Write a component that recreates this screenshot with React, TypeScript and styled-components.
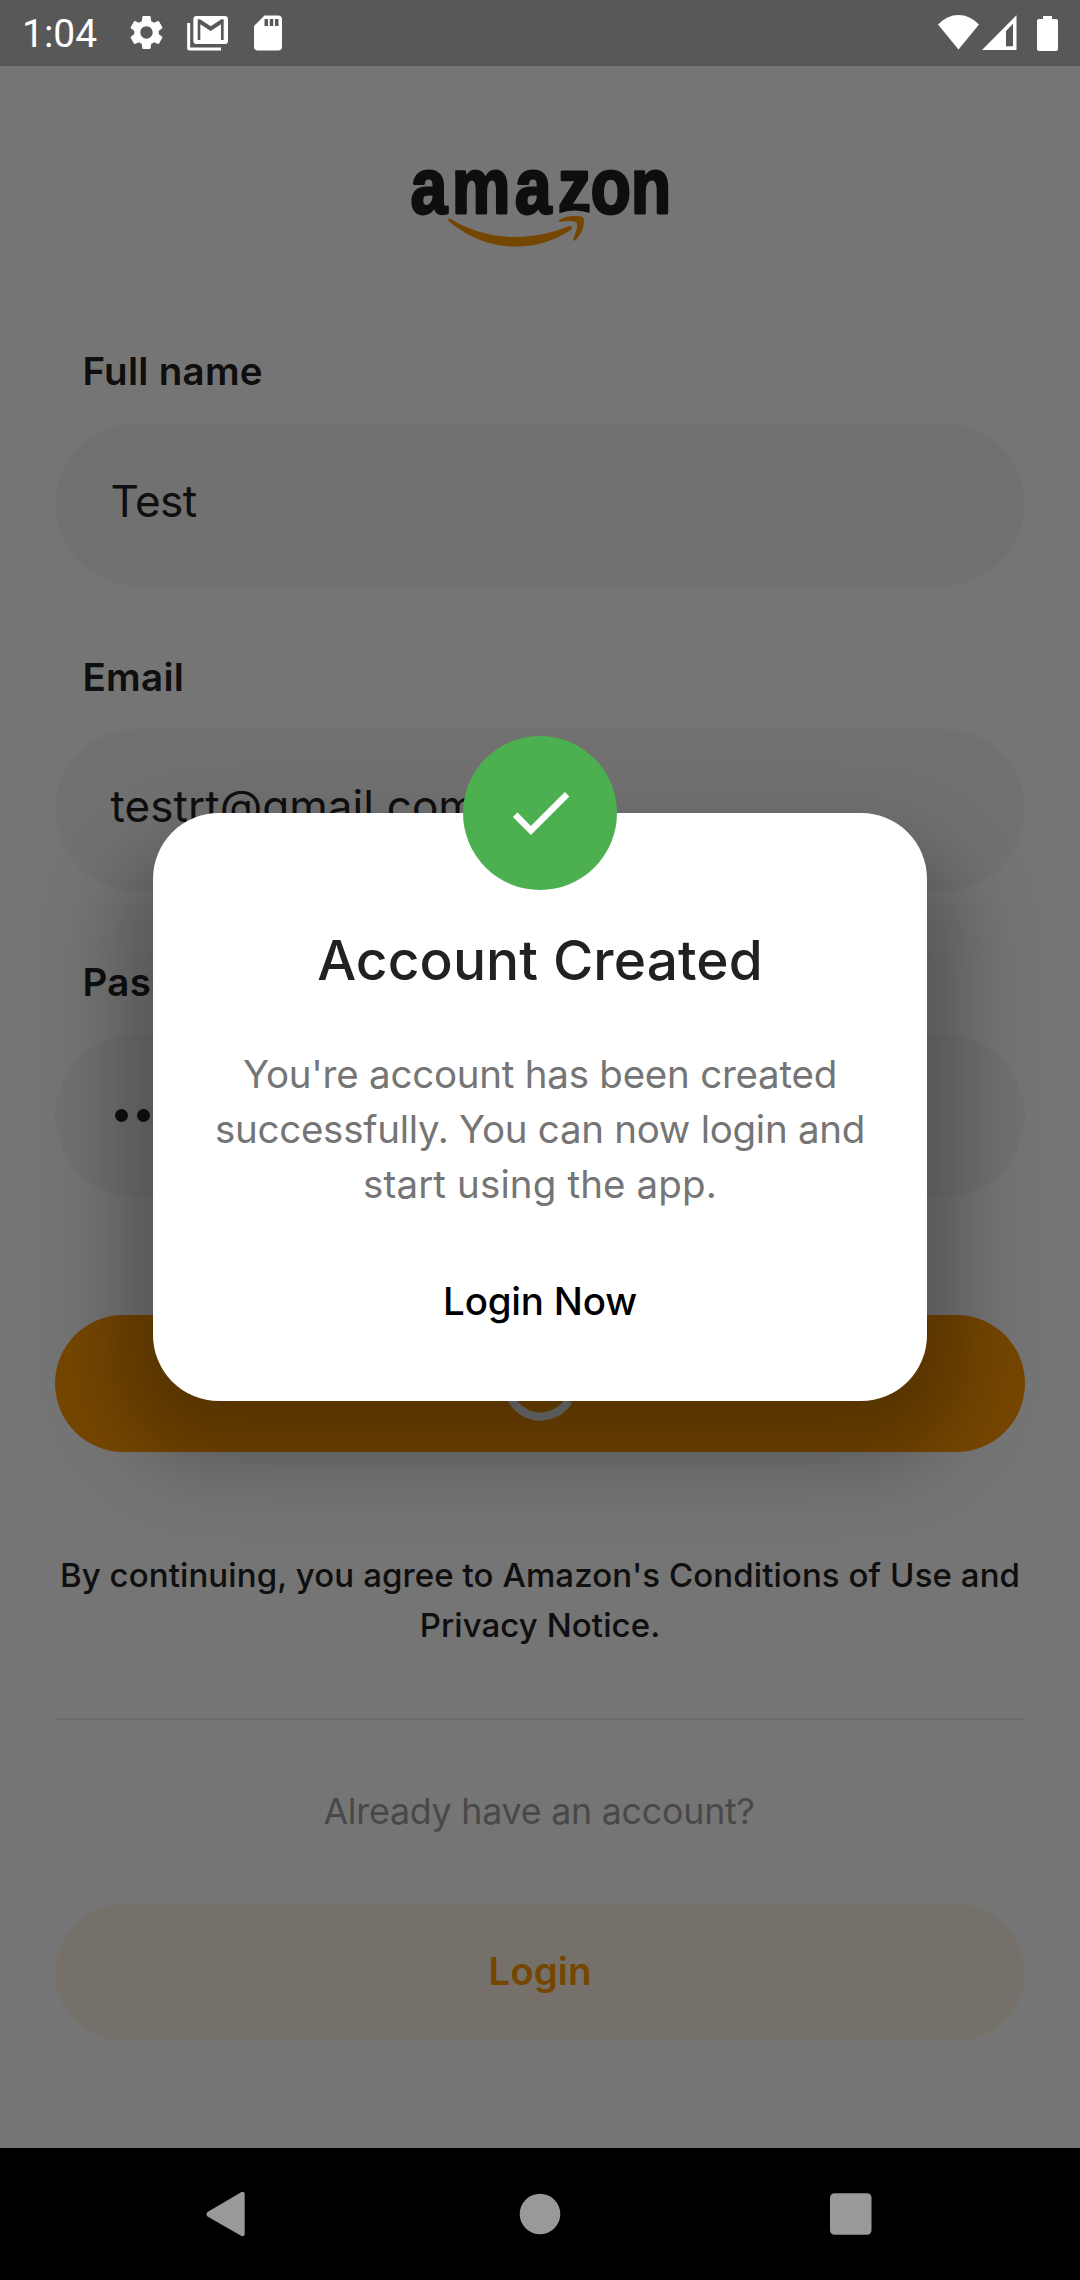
import React from 'react';
import styled, { createGlobalStyle } from 'styled-components';
import { MdSettings, MdSdCard, MdCheck } from 'react-icons/md';

const GlobalStyle = createGlobalStyle`
  *, *::before, *::after { box-sizing: border-box; }
  body {
    margin: 0;
    background: #fff;
    font-family: Inter, Roboto, sans-serif;
    color: #212121;
  }
  svg { display: block; flex: none; overflow: visible; }
  button { border: 0; padding: 0; font-family: inherit; }
`;

const Phone = styled.div`
  width: 1080px;
  height: 2280px;
  display: flex;
  flex-direction: column;
  overflow: hidden;
`;

const StatusBar = styled.header`
  height: 66px;
  flex: none;
  display: flex;
  align-items: flex-start;
  justify-content: space-between;
  background: #585858;
  color: #fff;
`;

const StatusLeft = styled.div`
  display: flex;
  align-items: flex-start;
  padding: 12px 0 0 22px;
`;

const Clock = styled.span`
  width: 104px;
  font: 400 39px/44px Roboto, sans-serif;
`;

const StatusIcon = styled.span<{ $gap: number; $drop?: number }>`
  margin-top: ${(p) => p.$drop ?? 0}px;
  margin-right: ${(p) => p.$gap}px;
`;

const StatusRight = styled.div`
  display: flex;
  padding: 14px 22px 0 0;
`;

const Screen = styled.main`
  position: relative;
  height: 2082px;
  flex: none;
  display: flex;
  flex-direction: column;
  padding: 74px 55px 0;
  background: #fff;
`;

const LogoBox = styled.div`
  display: flex;
  justify-content: center;
  margin-bottom: 78.4px;
`;

const Field = styled.label`
  display: flex;
  flex-direction: column;
  gap: 29.1px;
  margin-bottom: 67.85px;
`;

const FieldLabel = styled.span`
  padding-left: 27.5px;
  font-size: 38.5px;
  line-height: 46px;
  font-weight: 600;
  letter-spacing: 0.28px;
`;

const Input = styled.div<{ $spacing?: number; $lift?: number }>`
  display: flex;
  align-items: center;
  height: 162.5px;
  padding: 0 55px ${(p) => p.$lift ?? 8}px 55.5px;
  border-radius: 82px;
  background: #f7f7f7;
  font-size: 44px;
  letter-spacing: ${(p) => p.$spacing ?? 0}px;
`;

const Dots = styled.span`
  display: flex;
  gap: 9.2px;
  padding-left: 4px;
`;

const Dot = styled.i`
  width: 13px;
  height: 13px;
  border-radius: 50%;
  background: #212121;
`;

const PillButton = styled.button<{ $soft?: boolean }>`
  display: flex;
  align-items: center;
  justify-content: center;
  flex: none;
  height: 137.5px;
  border-radius: 69px;
  background: ${(p) => (p.$soft ? '#fff7e8' : '#ff9900')};
  color: #ff9900;
  font-size: 38.5px;
  font-weight: 600;
  margin-top: ${(p) => (p.$soft ? 70.4 : 50.2)}px;
  padding-bottom: ${(p) => (p.$soft ? 3 : 0)}px;
`;

const Terms = styled.p`
  margin: 97.3px -10px 0;
  text-align: center;
  font-size: 33px;
  line-height: 50px;
  font-weight: 500;
  letter-spacing: 0.09px;
`;

const Divider = styled.hr`
  width: 100%;
  height: 2px;
  margin: 68.7px 0 0;
  border: 0;
  background: #ebebeb;
`;

const Hint = styled.p`
  margin: 68.8px 0 0;
  padding-right: 2px;
  text-align: center;
  color: #9e9e9e;
  font-size: 35.75px;
  line-height: 44px;
  letter-spacing: -0.22px;
`;

const Scrim = styled.div`
  position: absolute;
  inset: 0;
  display: flex;
  align-items: center;
  justify-content: center;
  background: rgba(0, 0, 0, 0.54);
`;

const Dialog = styled.section`
  position: relative;
  isolation: isolate;
  width: 774px;
  height: 588.5px;
  display: flex;
  flex-direction: column;
  align-items: center;
  padding-top: 114.5px;
  text-align: center;

  &::before {
    content: '';
    position: absolute;
    z-index: -2;
    inset: 28px -36px -60px;
    border-radius: 100px;
    background: rgba(0, 0, 0, 0.26);
    filter: blur(38px);
  }

  &::after {
    content: '';
    position: absolute;
    z-index: -1;
    inset: 0;
    border-radius: 66px;
    background: #fff;
  }
`;

const Badge = styled.div`
  position: absolute;
  top: -77px;
  left: 310px;
  width: 154px;
  height: 154px;
  display: flex;
  align-items: center;
  justify-content: center;
  border-radius: 50%;
  background: #4caf50;
  color: #fff;
`;

const Title = styled.h2`
  margin: 0;
  font-size: 55px;
  line-height: 66px;
  font-weight: 500;
  letter-spacing: 0.12px;
`;

const Message = styled.p`
  margin: 54.2px 0 65.5px;
  color: #757575;
  font-size: 38.5px;
  line-height: 55px;
`;

const Line = styled.span<{ $spacing: number }>`
  display: block;
  letter-spacing: ${(p) => p.$spacing}px;
`;

const TextButton = styled.button`
  background: none;
  color: #000;
  font-size: 38.5px;
  line-height: 46px;
  font-weight: 500;
  letter-spacing: -0.2px;
`;

const NavBar = styled.nav`
  flex: 1;
  display: flex;
  align-items: center;
  justify-content: space-between;
  padding: 0 206px;
  background: #000;
`;

const AmazonLogo = () => (
  <svg width="300" height="130" viewBox="0 0 900 390">
    <text
      transform="scale(0.85 1)"
      x="73 219 441 593 709 851"
      y="219"
      fill="#221f1f"
      stroke="#221f1f"
      strokeWidth="9"
      strokeLinejoin="round"
      fontFamily="'Liberation Sans', Arial, sans-serif"
      fontWeight="700"
      fontSize="231"
    >
      amazon
    </text>
    <path d="M500 230L508 220Q552 203 600 219L606 230Z" fill="#fff" />
    <path
      d="M173 239Q177 234 184 238C238 271 300 291 375 291C436 290 486 279 536 259Q544 256 546 263Q547 267 541 271C492 303 438 320 378 320C300 320 232 291 177 244Q173 241 173 239Z"
      fill="#ff9900"
    />
    <path
      d="M506 242C519 231 537 228 554 228C568 228 578 230 581 234C585 257 574 284 556 301Q549 305 550 297C556 281 565 257 561 250C556 242 530 242 512 245Q506 246 506 242Z"
      fill="#ff9900"
    />
  </svg>
);

const GmailStack = () => (
  <svg width="41" height="35" viewBox="0 0 123 105">
    <path d="M5 21V96Q5 99 8 99H102" fill="none" stroke="#fff" strokeWidth="9" />
    <path
      fill="#fff"
      fillRule="evenodd"
      d="M29 0H113Q123 0 123 10V74Q123 84 113 84H29Q19 84 19 74V10Q19 0 29 0ZM32 10V72H40V25L71 45L102 25V72H110V10H103L71 31L39 10Z"
    />
  </svg>
);

const Wifi = () => (
  <svg width="41" height="36" viewBox="0 0 41 36">
    <path d="M0 10.500Q9 1 20.500 1Q32 1 41 10.500L20.500 35.500Z" fill="#fff" />
  </svg>
);

const Signal = () => (
  <svg width="35" height="36" viewBox="0 0 35 36">
    <path fill="#fff" fillRule="evenodd" d="M34.500 1.300V36H0ZM31 9.800L24 17V32.300H31Z" />
  </svg>
);

const Battery = () => (
  <svg width="21" height="37" viewBox="0 0 21 37">
    <path fill="#fff" d="M6 2H15V5H19Q21 5 21 7V35Q21 37 19 37H2Q0 37 0 35V7Q0 5 2 5H6Z" />
  </svg>
);

const Spinner = () => (
  <svg width="75" height="75" viewBox="-37.500 -37.500 75 75">
    <path d="M28 17.500A33 33 0 1 1 16.500 -28.600" fill="none" stroke="#fff" strokeWidth="8.250" />
  </svg>
);

const fields = [
  { label: 'Full name', value: 'Test', spacing: -0.5 },
  { label: 'Email', value: 'testrt@gmail.com', spacing: 0.05 },
];

export default function App() {
  return (
    <Phone>
      <GlobalStyle />
      <StatusBar>
        <StatusLeft>
          <Clock>1:04</Clock>
          <StatusIcon $gap={20}>
            <MdSettings size={41} />
          </StatusIcon>
          <StatusIcon $gap={19} $drop={4}>
            <GmailStack />
          </StatusIcon>
          <StatusIcon $gap={0}>
            <MdSdCard size={42} />
          </StatusIcon>
        </StatusLeft>
        <StatusRight>
          <StatusIcon $gap={3}>
            <Wifi />
          </StatusIcon>
          <StatusIcon $gap={20}>
            <Signal />
          </StatusIcon>
          <Battery />
        </StatusRight>
      </StatusBar>

      <Screen>
        <LogoBox>
          <AmazonLogo />
        </LogoBox>
        {fields.map((f) => (
          <Field key={f.label}>
            <FieldLabel>{f.label}</FieldLabel>
            <Input $spacing={f.spacing}>{f.value}</Input>
          </Field>
        ))}
        <Field>
          <FieldLabel>Password</FieldLabel>
          <Input $lift={0}>
            <Dots>
              {Array.from({ length: 8 }, (_, i) => (
                <Dot key={i} />
              ))}
            </Dots>
          </Input>
        </Field>
        <PillButton>
          <Spinner />
        </PillButton>
        <Terms>
          By continuing, you agree to Amazon's Conditions of Use and
          <br />
          Privacy Notice.
        </Terms>
        <Divider />
        <Hint>Already have an account?</Hint>
        <PillButton $soft>Login</PillButton>

        <Scrim>
          <Dialog>
            <Badge>
              <MdCheck size={77} />
            </Badge>
            <Title>Account Created</Title>
            <Message>
              <Line $spacing={-0.24}>You're account has been created</Line>
              <Line $spacing={-0.27}>successfully. You can now login and</Line>
              <Line $spacing={0.13}>start using the app.</Line>
            </Message>
            <TextButton>Login Now</TextButton>
          </Dialog>
        </Scrim>
      </Screen>

      <NavBar>
        <svg width="42" height="46" viewBox="0 0 42 46">
          <path d="M1.500 21L35.500 1Q38.500 0 38.700 3V43Q38.500 46 35.500 45L1.500 25.500Q-.5 23 1.500 21Z" fill="#999" />
        </svg>
        <svg width="42" height="42" viewBox="0 0 42 42">
          <circle cx="22" cy="21" r="20.300" fill="#999" />
        </svg>
        <svg width="44" height="44" viewBox="0 0 44 44">
          <rect x="0" y="1.300" width="41.500" height="41.500" rx="4.500" fill="#999" />
        </svg>
      </NavBar>
    </Phone>
  );
}
